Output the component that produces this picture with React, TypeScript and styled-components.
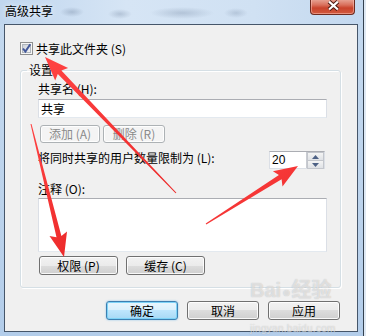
import React from 'react';
import styled, { createGlobalStyle } from 'styled-components';

type Pt = [number, number];

const GlobalStyle = createGlobalStyle`
    html, body {
        margin: 0;
        padding: 0;
        background: #dfe9f4;
    }
    body {
        font-family: "Noto Sans CJK SC", "Liberation Sans", sans-serif;
        font-size: 12px;
        color: #000;
    }
`;

// tapered red annotation arrow
const arrowPoints = (tail: Pt, tip: Pt, head = 21, headW = 18, shaft = 5, tailW = 1) => {
    const dx = tip[0] - tail[0];
    const dy = tip[1] - tail[1];
    const len = Math.hypot(dx, dy);
    const ux = dx / len;
    const uy = dy / len;
    const nx = -uy;
    const ny = ux;
    const bx = tip[0] - ux * head;
    const by = tip[1] - uy * head;
    const wx = bx - ux * 3;
    const wy = by - uy * 3;
    const pts: Pt[] = [
        [tail[0] + (nx * tailW) / 2, tail[1] + (ny * tailW) / 2],
        [bx + (nx * shaft) / 2, by + (ny * shaft) / 2],
        [wx + (nx * headW) / 2, wy + (ny * headW) / 2],
        tip,
        [wx - (nx * headW) / 2, wy - (ny * headW) / 2],
        [bx - (nx * shaft) / 2, by - (ny * shaft) / 2],
        [tail[0] - (nx * tailW) / 2, tail[1] - (ny * tailW) / 2],
    ];
    return pts.map((p) => `${p[0].toFixed(1)},${p[1].toFixed(1)}`).join(' ');
};

const arrows: { tail: Pt; tip: Pt }[] = [
    { tail: [176, 193], tip: [45, 57] },
    { tail: [206, 224], tip: [298, 166] },
    { tail: [31, 124], tip: [64, 257] },
];

const CheckIcon = () => (
    <svg width="13" height="13" viewBox="0 0 13 13">
        <defs>
            <linearGradient id="cb-in" x1="0" y1="0" x2="1" y2="1">
                <stop offset="0" stopColor="#c9ced6" />
                <stop offset="1" stopColor="#f7f7f7" />
            </linearGradient>
        </defs>
        <rect x="0.5" y="0.5" width="12" height="12" fill="#f6f6f6" stroke="#8e8f8f" />
        <rect x="2.5" y="2.5" width="8" height="8" fill="url(#cb-in)" stroke="#b0b6bd" />
        <path d="M3 6.5 L5.4 9.6 L10.3 2.2" fill="none" stroke="#43589a" strokeWidth="2" />
    </svg>
);

const CloseIcon = () => (
    <svg width="45" height="16" viewBox="0 0 45 16">
        <path d="M19.5 2.5 L28.5 10.5 M28.5 2.5 L19.5 10.5" stroke="#4a1a12" strokeWidth="4.2" />
        <path d="M19.5 2.5 L28.5 10.5 M28.5 2.5 L19.5 10.5" stroke="#ffffff" strokeWidth="2.2" />
    </svg>
);

const SpinArrow: React.FC<{ up?: boolean }> = ({ up }) => (
    <svg width="7" height="4" viewBox="0 0 7 4">
        <path d={up ? 'M0 4 L3.5 0 L7 4 Z' : 'M0 0 L3.5 4 L7 0 Z'} fill="#4d6185" />
    </svg>
);

const App: React.FunctionComponent = () => {
    return (
        <>
            <GlobalStyle />
            <Style.Window>
                <Style.TitleBar>
                    <Style.Title>高级共享</Style.Title>
                    <Style.Close>
                        <CloseIcon />
                    </Style.Close>
                </Style.TitleBar>
                <Style.Client>
                    <Style.CheckRow>
                        <CheckIcon />
                        <span>共享此文件夹 (S)</span>
                    </Style.CheckRow>
                    <Style.Group>
                        <Style.Legend>设置</Style.Legend>
                        <Style.GroupBody>
                            <Style.Label>共享名 (H):</Style.Label>
                            <Style.TextBox readOnly defaultValue="共享" />
                            <Style.ButtonRow $gap={3} $indent={2}>
                                <Style.Button $w={60} $h={18} $kind="disabled">
                                    添加 (A)
                                </Style.Button>
                                <Style.Button $w={62} $h={18} $kind="disabled">
                                    删除 (R)
                                </Style.Button>
                            </Style.ButtonRow>
                            <Style.LimitRow>
                                <Style.Label>将同时共享的用户数量限制为 (L):</Style.Label>
                                <Style.Spin>
                                    <Style.SpinValue>20</Style.SpinValue>
                                    <Style.SpinButtons>
                                        <Style.SpinBtn>
                                            <SpinArrow up />
                                        </Style.SpinBtn>
                                        <Style.SpinBtn>
                                            <SpinArrow />
                                        </Style.SpinBtn>
                                    </Style.SpinButtons>
                                </Style.Spin>
                            </Style.LimitRow>
                            <Style.Label className="comment">注释 (O):</Style.Label>
                            <Style.Memo readOnly defaultValue="" />
                            <Style.ButtonRow $gap={8} $indent={1} className="bottom">
                                <Style.Button $w={79} $h={19}>
                                    权限 (P)
                                </Style.Button>
                                <Style.Button $w={79} $h={19}>
                                    缓存 (C)
                                </Style.Button>
                            </Style.ButtonRow>
                        </Style.GroupBody>
                    </Style.Group>
                    <Style.Footer>
                        <Style.Button $w={72} $h={19} $kind="default">
                            确定
                        </Style.Button>
                        <Style.Button $w={72} $h={19}>
                            取消
                        </Style.Button>
                        <Style.Button $w={72} $h={19}>
                            应用
                        </Style.Button>
                    </Style.Footer>
                </Style.Client>
                <Style.Watermark>
                    <div className="brand">
                        Bai
                        <span className="paw">●</span>
                        经验
                    </div>
                    <div className="url">jingyan.baidu.com</div>
                </Style.Watermark>
                <Style.Arrows width="366" height="336" viewBox="0 0 366 336">
                    <defs>
                        <linearGradient id="arrow-red" x1="0" y1="0" x2="1" y2="1">
                            <stop offset="0" stopColor="#ff4242" />
                            <stop offset="1" stopColor="#ec2a2a" />
                        </linearGradient>
                    </defs>
                    {arrows.map((a, i) => (
                        <polygon key={i} points={arrowPoints(a.tail, a.tip)} fill="url(#arrow-red)" />
                    ))}
                </Style.Arrows>
            </Style.Window>
        </>
    );
};

const Style = {
    Window: styled.div`
        position: relative;
        width: 363px;
        height: 336px;
        border-right: 1px solid #34414f;
        background: linear-gradient(180deg, #c4d9ef 0%, #bcd3ec 60%, #b3cdea 100%);
        display: flex;
        flex-direction: column;
        overflow: hidden;
    `,
    TitleBar: styled.div`
        height: 24px;
        flex: none;
        display: flex;
        justify-content: space-between;
        align-items: flex-start;
        padding: 0 8px 0 5px;
        background:
            radial-gradient(ellipse 12px 5px at 72px 12px, rgba(80, 100, 130, 0.28), transparent),
            radial-gradient(ellipse 12px 5px at 120px 14px, rgba(80, 100, 130, 0.25), transparent),
            radial-gradient(ellipse 32px 6px at 182px 13px, rgba(80, 100, 130, 0.25), transparent),
            radial-gradient(ellipse 12px 5px at 236px 13px, rgba(80, 100, 130, 0.22), transparent),
            linear-gradient(90deg, #c0d6ee 0%, #d6e5f5 35%, #d0e1f3 70%, #c3d8ef 100%);
    `,
    Title: styled.div`
        margin-top: 3px;
        font-size: 12px;
        line-height: 16px;
        color: #000;
        text-shadow: 0 0 6px rgba(255, 255, 255, 0.9);
    `,
    Close: styled.div`
        width: 45px;
        height: 16px;
        margin-top: -1px;
        box-sizing: border-box;
        border: 1px solid #6d2a1f;
        border-top: none;
        border-radius: 0 0 4px 4px;
        background: linear-gradient(180deg, #e9a99a 0%, #d9705c 40%, #c9432c 60%, #d25a3f 100%);
        box-shadow: inset 0 0 0 1px rgba(255, 200, 190, 0.5);
        display: flex;
        svg {
            margin-left: -1px;
        }
    `,
    Client: styled.div`
        width: 354px;
        height: 308px;
        margin-left: 4px;
        box-sizing: border-box;
        border: 1px solid #46566a;
        background: #f0f0f0;
        padding: 17px 16px 0 15px;
        display: flex;
        flex-direction: column;
    `,
    CheckRow: styled.div`
        height: 13px;
        display: flex;
        align-items: center;
        gap: 3px;
        line-height: 14px;
        svg {
            flex: none;
        }
    `,
    Group: styled.fieldset`
        margin: 8px 0 0;
        width: 321px;
        box-sizing: border-box;
        padding: 0 0 12px 6px;
        border: 1px solid #d5dfe5;
        border-radius: 3px;
        box-shadow: inset 1px 1px 0 #ffffff, 1px 1px 0 #ffffff;
        min-width: 0;
    `,
    Legend: styled.legend`
        padding: 0 2px;
        font-size: 12px;
        line-height: 14px;
    `,
    GroupBody: styled.div`
        padding: 5px 13px 0 11px;
        display: flex;
        flex-direction: column;
        .comment {
            margin-top: 13px;
        }
        .bottom {
            margin-top: 4px;
        }
    `,
    Label: styled.div`
        font-size: 12px;
        line-height: 14px;
        white-space: nowrap;
    `,
    TextBox: styled.input`
        margin-top: 3px;
        height: 19px;
        width: 100%;
        box-sizing: border-box;
        border: 1px solid #dbdfe6;
        border-top-color: #abadb3;
        border-bottom-color: #e3e9ef;
        background: #fff;
        padding: 0 2px;
        font-family: "Noto Sans CJK SC", "Liberation Sans", sans-serif;
        font-size: 12px;
        outline: none;
    `,
    Memo: styled.textarea`
        margin-top: 2px;
        height: 54px;
        width: 100%;
        box-sizing: border-box;
        border: 1px solid #dbdfe6;
        border-top-color: #abadb3;
        border-bottom-color: #e3e9ef;
        background: #fff;
        resize: none;
        outline: none;
        display: block;
    `,
    ButtonRow: styled.div<{ $gap: number; $indent: number }>`
        margin-top: 7px;
        display: flex;
        gap: ${(p) => p.$gap}px;
        padding-left: ${(p) => p.$indent}px;
    `,
    Button: styled.div<{ $w: number; $h: number; $kind?: 'normal' | 'default' | 'disabled' }>`
        width: ${(p) => p.$w}px;
        height: ${(p) => p.$h}px;
        box-sizing: border-box;
        border-radius: 3px;
        display: flex;
        align-items: center;
        justify-content: center;
        font-size: 12px;
        line-height: 14px;
        white-space: nowrap;
        border: 1px solid
            ${(p) => (p.$kind === 'default' ? '#3c7fb1' : p.$kind === 'disabled' ? '#adb2b5' : '#707070')};
        color: ${(p) => (p.$kind === 'disabled' ? '#8a8a8a' : '#000')};
        background: ${(p) =>
            p.$kind === 'default'
                ? 'linear-gradient(180deg, #eaf6fd 0%, #d9f0fc 50%, #bee6fd 50%, #a7d9f5 100%)'
                : p.$kind === 'disabled'
                ? '#f4f4f4'
                : 'linear-gradient(180deg, #f2f2f2 0%, #ebebeb 50%, #dddddd 50%, #cfcfcf 100%)'};
        box-shadow: ${(p) =>
            p.$kind === 'default'
                ? 'inset 0 0 0 1px #7ed3f7, 0 0 2px rgba(60, 160, 230, 0.6)'
                : 'inset 0 0 0 1px rgba(255, 255, 255, 0.85)'};
    `,
    LimitRow: styled.div`
        margin-top: 8px;
        display: flex;
        justify-content: space-between;
        align-items: flex-start;
    `,
    Spin: styled.div`
        width: 56px;
        height: 18px;
        margin-right: 2px;
        box-sizing: border-box;
        border: 1px solid #dbdfe6;
        border-top-color: #abadb3;
        background: #fff;
        display: flex;
    `,
    SpinValue: styled.div`
        flex: 1;
        padding-left: 2px;
        font-family: "Liberation Sans", sans-serif;
        font-size: 12px;
        line-height: 16px;
    `,
    SpinButtons: styled.div`
        width: 17px;
        display: flex;
        flex-direction: column;
        border-left: 1px solid #c9ccd2;
    `,
    SpinBtn: styled.div`
        flex: 1;
        display: flex;
        align-items: center;
        justify-content: center;
        background: linear-gradient(180deg, #f4f4f4, #dfe2e6);
        border: 1px solid #c3c6cc;
        margin: 0 0 -1px;
    `,
    Footer: styled.div`
        margin-top: 13px;
        margin-right: 1px;
        display: flex;
        justify-content: flex-end;
        gap: 9px;
    `,
    Watermark: styled.div`
        position: absolute;
        left: 250px;
        top: 279px;
        width: 90px;
        pointer-events: none;
        color: rgba(255, 255, 255, 0.55);
        text-shadow: 0 0 1px rgba(110, 110, 110, 0.45);
        .brand {
            font-family: "Liberation Sans", "Noto Sans CJK SC", sans-serif;
            font-size: 20px;
            font-weight: 700;
            line-height: 22px;
        }
        .paw {
            font-size: 14px;
            margin: 0 1px;
        }
        .url {
            font-family: "Liberation Sans", sans-serif;
            font-size: 10px;
            line-height: 12px;
            margin-top: 20px;
            letter-spacing: 0.3px;
        }
    `,
    Arrows: styled.svg`
        position: absolute;
        left: 0;
        top: 0;
        pointer-events: none;
    `,
};

export default App;
